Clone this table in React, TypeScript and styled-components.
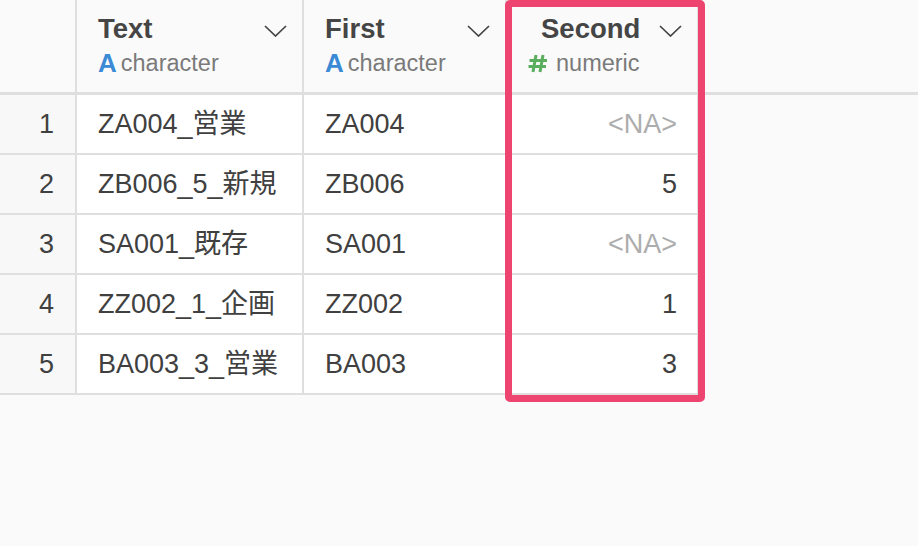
import React from "react";
import styled, { createGlobalStyle } from "styled-components";

const GlobalStyle = createGlobalStyle`
  html, body { margin: 0; padding: 0; background: #fafafa; }
  body { font-family: "Liberation Sans", "Noto Sans CJK JP", Arial, sans-serif; }
`;

const LINE = "#dfdfdf";
const COLS = "77px 227px 203px 192px";

const Page = styled.div`
  width: 918px;
  height: 546px;
  background: #fafafa;
  overflow: hidden;
`;

const Table = styled.div`
  position: relative;
  width: 918px;
`;

const HeaderRow = styled.div`
  display: grid;
  grid-template-columns: ${COLS} 1fr;
  height: 92px;
  border-bottom: 3px solid ${LINE};
  background: #fafafa;
`;

const HeaderCell = styled.div<{ $last?: boolean }>`
  box-sizing: border-box;
  border-right: ${(p) => (p.$last ? "none" : `2px solid ${LINE}`)};
  padding: 13px 15px 0 21px;
  display: flex;
  flex-direction: column;
`;

const TitleLine = styled.div<{ $indent?: number }>`
  display: flex;
  align-items: center;
  justify-content: space-between;
  height: 32px;
  line-height: 32px;
  padding-left: ${(p) => p.$indent ?? 0}px;
`;

const Title = styled.span`
  font-size: 27.5px;
  font-weight: 700;
  color: #454545;
`;

const Chevron = styled.svg`
  width: 23px;
  height: 12px;
  margin-top: 3px;
`;

const TypeLine = styled.div`
  display: flex;
  align-items: center;
  margin-top: 3px;
  font-size: 23.5px;
  line-height: 30px;
  color: #7a7a7a;
  height: 30px;
`;

const LetterIcon = styled.span`
  color: #3a8ad6;
  font-weight: 700;
  font-size: 26px;
  margin-right: 4px;
`;

const HashIcon = styled.svg`
  width: 20px;
  height: 19px;
  margin: 0 8px 0 0;
`;

const Row = styled.div`
  display: grid;
  grid-template-columns: ${COLS};
  width: 699px;
  height: 60px;
`;

const Cell = styled.div<{ $align?: "left" | "right"; $index?: boolean }>`
  box-sizing: border-box;
  display: flex;
  align-items: center;
  justify-content: ${(p) => (p.$align === "right" ? "flex-end" : "flex-start")};
  padding: ${(p) => (p.$index ? "0 21px 0 0" : p.$align === "right" ? "0 20px 0 0" : "0 0 0 21px")};
  background: ${(p) => (p.$index ? "#f8f8f8" : "#ffffff")};
  border-right: 2px solid ${LINE};
  border-bottom: 2px solid ${LINE};
  font-size: 27px;
  line-height: 30px;
  color: #404040;
  white-space: nowrap;
`;

const NA = styled.span`
  color: #adadad;
`;

const Highlight = styled.div`
  position: absolute;
  left: 505px;
  top: 0;
  width: 200px;
  height: 402px;
  box-sizing: border-box;
  border: 7px solid #ee4570;
  border-radius: 5px;
  pointer-events: none;
`;

type Col = { name: string; type: "character" | "numeric"; indent?: number };

const columns: Col[] = [
  { name: "Text", type: "character" },
  { name: "First", type: "character" },
  { name: "Second", type: "numeric", indent: 13 },
];

const rows: [string, string, number | null][] = [
  ["ZA004_営業", "ZA004", null],
  ["ZB006_5_新規", "ZB006", 5],
  ["SA001_既存", "SA001", null],
  ["ZZ002_1_企画", "ZZ002", 1],
  ["BA003_3_営業", "BA003", 3],
];

const ChevronIcon = () => (
  <Chevron viewBox="0 0 23 12">
    <polyline points="1,1 11.5,11 22,1" fill="none" stroke="#444" strokeWidth="1.7" />
  </Chevron>
);

const Hash = () => (
  <HashIcon viewBox="0 0 20 19">
    <g stroke="#5aae5e" strokeWidth="3" fill="none">
      <line x1="8" y1="1" x2="5" y2="18" />
      <line x1="15" y1="1" x2="12" y2="18" />
      <line x1="1.5" y1="6.5" x2="19" y2="6.5" />
      <line x1="0.5" y1="12.5" x2="18" y2="12.5" />
    </g>
  </HashIcon>
);

export default function App() {
  return (
    <Page>
      <GlobalStyle />
      <Table>
        <HeaderRow>
          <HeaderCell />
          {columns.map((c) => (
            <HeaderCell key={c.name}>
              <TitleLine $indent={c.indent}>
                <Title>{c.name}</Title>
                <ChevronIcon />
              </TitleLine>
              <TypeLine>
                {c.type === "character" ? <LetterIcon>A</LetterIcon> : <Hash />}
                {c.type}
              </TypeLine>
            </HeaderCell>
          ))}
          <HeaderCell $last />
        </HeaderRow>
        {rows.map((r, i) => (
          <Row key={i}>
            <Cell $index $align="right">{i + 1}</Cell>
            <Cell>{r[0]}</Cell>
            <Cell>{r[1]}</Cell>
            <Cell $align="right">{r[2] === null ? <NA>&lt;NA&gt;</NA> : r[2]}</Cell>
          </Row>
        ))}
        <Highlight />
      </Table>
    </Page>
  );
}
